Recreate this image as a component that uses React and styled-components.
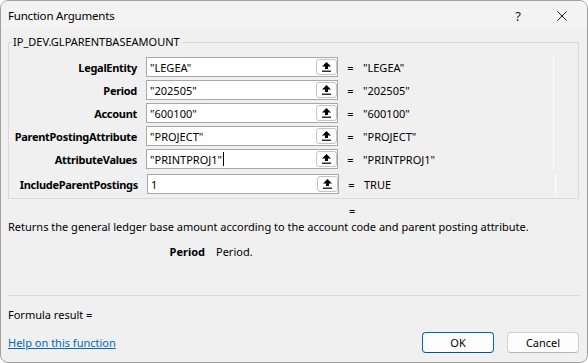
import React from "react";
import styled, { createGlobalStyle } from "styled-components";

const FONT = `"Noto Sans", "Open Sans", sans-serif`;

const ARGS = [
  { name: "LegalEntity", value: '"LEGEA"', result: '"LEGEA"' },
  { name: "Period", value: '"202505"', result: '"202505"' },
  { name: "Account", value: '"600100"', result: '"600100"' },
  { name: "ParentPostingAttribute", value: '"PROJECT"', result: '"PROJECT"' },
  { name: "AttributeValues", value: '"PRINTPROJ1"', result: '"PRINTPROJ1"', focused: true },
];

const LAST = { name: "IncludeParentPostings", value: "1", result: "TRUE" };

export default function App() {
  return (
    <>
      <GlobalStyle />
      <Window>
        <TitleBar>
          <Title>Function Arguments</Title>
          <Caption>?</Caption>
          <Caption>
            <svg width="10" height="10" viewBox="0 0 10 10">
              <path d="M0.5 0.5 L9.5 9.5 M9.5 0.5 L0.5 9.5" stroke="#1a1a1a" strokeWidth="1" />
            </svg>
          </Caption>
        </TitleBar>

        <Group>
          <Legend>IP_DEV.GLPARENTBASEAMOUNT</Legend>
          <ScrollArea>
            {ARGS.map((a) => (
              <ArgRow key={a.name} {...a} />
            ))}
          </ScrollArea>
          <LastRow>
            <ArgRow {...LAST} />
          </LastRow>
        </Group>

        <DescEq>=</DescEq>
        <Desc>Returns the general ledger base amount according to the account code and parent posting attribute.</Desc>
        <ArgHelp>
          <ArgName>Period</ArgName>
          <span>Period.</span>
        </ArgHelp>

        <Separator />
        <Result>Formula result =</Result>

        <Footer>
          <HelpLink href="#">Help on this function</HelpLink>
          <Button $primary>OK</Button>
          <Button>Cancel</Button>
        </Footer>
      </Window>
    </>
  );
}

function ArgRow({ name, value, result, focused }) {
  return (
    <Row>
      <Label>{name}</Label>
      <Field>
        <span>{value}</span>
        {focused && <Caret />}
        <RefButton>
          <svg width="9" height="10" viewBox="0 0 9 10">
            <path d="M4.5 0 L9 4.5 H6 V7 H3 V4.5 H0 Z" fill="#000" />
            <rect x="0" y="8.6" width="9" height="1.2" fill="#000" />
          </svg>
        </RefButton>
      </Field>
      <Eq>=</Eq>
      <Value>{result}</Value>
    </Row>
  );
}

const GlobalStyle = createGlobalStyle`
  html, body {
    margin: 0;
    padding: 0;
    background: #ffffff;
  }
  body {
    font-family: ${FONT};
    font-size: 11px;
    color: #000;
  }
  * {
    box-sizing: border-box;
  }
`;

const Window = styled.div`
  width: 588px;
  height: 363px;
  background: #f0f0f0;
  border: 1px solid #a0a0a0;
  border-radius: 8px;
  overflow: hidden;
  display: flex;
  flex-direction: column;
`;

const TitleBar = styled.div`
  height: 29px;
  flex-shrink: 0;
  display: flex;
  align-items: center;
  padding: 0 3px 0 7px;
  background: #f3f3f3;
`;

const Title = styled.div`
  font-size: 11.5px;
  letter-spacing: -0.2px;
  flex: 1;
`;

const Caption = styled.div`
  width: 44px;
  height: 29px;
  display: flex;
  align-items: center;
  justify-content: center;
  font-size: 13px;
  color: #1a1a1a;
`;

const Group = styled.fieldset`
  margin: 4px 0 0 7px;
  width: 571px;
  padding: 7px 0 4px 0;
  border: 1px solid #dadada;
  min-width: 0;
`;

const Legend = styled.legend`
  margin-left: 3px;
  padding: 0 1px;
  font-size: 11px;
  line-height: 16px;
`;

const ScrollArea = styled.div`
  width: 545px;
  display: flex;
  flex-direction: column;
  gap: 3px;
  border-right: 1px solid #ffffff;
`;

const LastRow = styled.div`
  width: 547px;
  margin-top: 5px;
  padding-left: 1px;
  border-right: 1px solid #ffffff;
`;

const Row = styled.div`
  display: grid;
  grid-template-columns: 137px 192px 25px 1fr;
  align-items: center;
  height: 20px;
`;

const Label = styled.div`
  text-align: right;
  padding-right: 9px;
  font-weight: 700;
  letter-spacing: -0.3px;
  white-space: nowrap;
`;

const Field = styled.div`
  height: 20px;
  display: flex;
  align-items: center;
  padding-left: 3px;
  background: #ffffff;
  border: 1px solid #a8a8a8;
  white-space: nowrap;
`;

const Caret = styled.span`
  width: 1px;
  height: 14px;
  margin-left: 1px;
  background: #000;
`;

const RefButton = styled.div`
  margin-left: auto;
  width: 21px;
  height: 16px;
  display: flex;
  align-items: center;
  justify-content: center;
  background: #ffffff;
  border: 1px solid #c4c4c4;
  border-radius: 3px;
`;

const Eq = styled.div`
  text-align: center;
`;

const Value = styled.div`
  white-space: nowrap;
`;

const DescEq = styled.div`
  margin-top: 4px;
  line-height: 16px;
  padding-left: 348px;
`;

const Desc = styled.div`
  line-height: 16px;
  padding-left: 7px;
`;

const ArgHelp = styled.div`
  margin-top: 9px;
  line-height: 16px;
  display: grid;
  grid-template-columns: 204px 1fr;
  column-gap: 11px;
`;

const ArgName = styled.span`
  text-align: right;
  font-weight: 700;
`;

const Separator = styled.div`
  margin: 35px 7px 0 7px;
  border-top: 1px solid #dadada;
`;

const Result = styled.div`
  margin-top: 11px;
  padding-left: 7px;
  line-height: 16px;
`;

const Footer = styled.div`
  margin-top: 9px;
  height: 21px;
  display: flex;
  align-items: center;
  gap: 13px;
  padding: 0 8px 0 7px;
`;

const HelpLink = styled.a`
  margin-right: auto;
  color: #0067c0;
  text-decoration: underline;
`;

const Button = styled.button`
  width: 72px;
  height: 21px;
  font-family: ${FONT};
  font-size: 11px;
  color: #000;
  background: #fdfdfd;
  border: 1px solid ${(p) => (p.$primary ? "#0067c0" : "#d0d0d0")};
  border-bottom-color: ${(p) => (p.$primary ? "#00539c" : "#b5b5b5")};
  border-radius: 4px;
  padding: 0;
`;
